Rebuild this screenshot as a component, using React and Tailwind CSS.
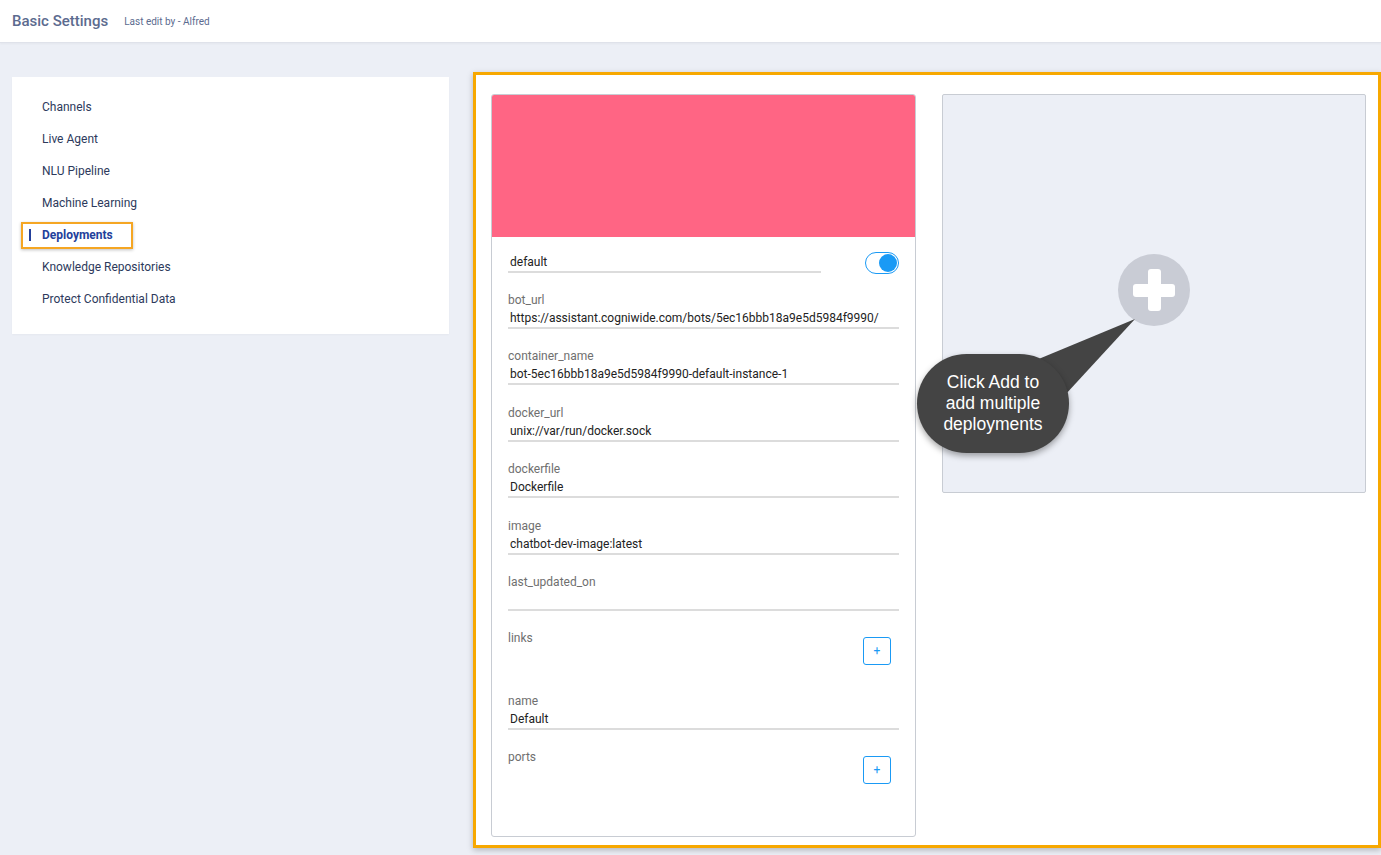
import React, { useState } from 'react';

const navItems = [
  'Channels',
  'Live Agent',
  'NLU Pipeline',
  'Machine Learning',
  'Deployments',
  'Knowledge Repositories',
  'Protect Confidential Data',
];

const fields = [
  { label: 'bot_url', value: 'https://assistant.cogniwide.com/bots/5ec16bbb18a9e5d5984f9990/' },
  { label: 'container_name', value: 'bot-5ec16bbb18a9e5d5984f9990-default-instance-1' },
  { label: 'docker_url', value: 'unix://var/run/docker.sock' },
  { label: 'dockerfile', value: 'Dockerfile' },
  { label: 'image', value: 'chatbot-dev-image:latest' },
  { label: 'last_updated_on', value: '' },
  { label: 'links', list: true },
  { label: 'name', value: 'Default' },
  { label: 'ports', list: true },
];

const Field = ({ label, value }) => (
  <div>
    <div className="text-xs leading-[14px] text-[#6f6f6f]">{label}</div>
    <div className="mt-[2px] h-[18px] px-[2px] text-xs leading-[18px] text-[#222] border-b-2 border-[#dcdcdc] box-content">
      {value}
    </div>
  </div>
);

const ListField = ({ label }) => (
  <div className="flex justify-between pb-[8px]">
    <div className="text-xs leading-[14px] text-[#6f6f6f]">{label}</div>
    <button className="mt-[6px] mr-[8px] w-[28px] h-[28px] border border-[#1a9af5] rounded-[3px] text-[#1a9af5] text-xs flex items-center justify-center">
      +
    </button>
  </div>
);

const Toggle = ({ on, onChange }) => (
  <button
    onClick={() => onChange(!on)}
    className="w-[34px] h-[22px] rounded-full border-[1.5px] border-[#1a9af5] bg-white flex items-center px-[1px] justify-end"
  >
    <span className="w-[18px] h-[18px] rounded-full bg-[#1a9af5]" />
  </button>
);

export default function App() {
  const [active, setActive] = useState('Deployments');
  const [enabled, setEnabled] = useState(true);

  return (
    <div className="min-h-[855px] bg-[#eceff6] font-['Roboto',sans-serif]">
      <header className="h-[43px] bg-white border-b border-[#dfe2ea] shadow-[0_1px_2px_rgba(0,0,0,0.04)] flex items-center pl-[12px]">
        <h1 className="text-[15px] font-medium text-[#5c6b8f]">Basic Settings</h1>
        <span className="ml-[16px] text-[10px] text-[#5c6b8f] mt-[1px]">Last edit by - Alfred</span>
      </header>

      <div className="flex items-start pl-[12px] pt-[29px] gap-[24px]">
        {/* settings nav */}
        <nav className="w-[437px] mt-[5px] bg-white pt-[14px] pb-[19px] shadow-[0_1px_2px_rgba(0,0,0,0.03)]">
          {navItems.map((item) => {
            const isActive = item === active;
            return (
              <div
                key={item}
                onClick={() => setActive(item)}
                className="relative h-[32px] flex items-center pl-[30px] cursor-pointer"
              >
                {isActive && (
                  <>
                    <span className="absolute left-[17px] top-[10px] w-[2px] h-[12px] bg-[#23409b]" />
                    <span className="absolute left-[9px] top-[3px] w-[112px] h-[27px] border-2 border-[#f5a623] shadow-[0_1px_3px_rgba(0,0,0,0.25)]" />
                  </>
                )}
                <span className={isActive ? 'text-xs font-bold text-[#23409b]' : 'text-xs text-[#2d3a5c]'}>
                  {item}
                </span>
              </div>
            );
          })}
        </nav>

        {/* deployments area */}
        <div className="flex-1 h-[776px] bg-white border-[3px] border-[#f7a800] shadow-[0_2px_6px_rgba(0,0,0,0.25)] flex items-start gap-[26px] pl-[15px] pt-[19px] pr-[12px]">
          <div className="w-[425px] h-[743px] border border-[#c8ccd3] rounded-[3px] bg-white overflow-hidden">
            <div className="h-[142px] bg-[#ff6584]" />
            <div className="px-[16px] pt-[15px]">
              <div className="flex items-center justify-between">
                <div className="w-[309px] h-[18px] px-[2px] text-xs leading-[18px] text-[#222] border-b-2 border-[#dcdcdc] box-content">
                  default
                </div>
                <Toggle on={enabled} onChange={setEnabled} />
              </div>
              <div className="mt-[19px] flex flex-col gap-[20.4px]">
                {fields.map((f) =>
                  f.list ? <ListField key={f.label} label={f.label} /> : <Field key={f.label} label={f.label} value={f.value} />
                )}
              </div>
            </div>
          </div>

          <div className="relative w-[424px] h-[399px] border border-[#c8ccd3] rounded-[2px] bg-[#eceff6] flex items-center justify-center">
            <button className="w-[72px] h-[72px] rounded-full bg-[#c9ccd5] flex items-center justify-center relative -mt-[7px]">
              <span className="absolute w-[42px] h-[13px] rounded-[3px] bg-white" />
              <span className="absolute w-[13px] h-[42px] rounded-[3px] bg-white" />
            </button>

            {/* callout */}
            <svg className="absolute left-0 top-0" width="424" height="399">
              <polygon points="86,268 192,224 122,300" fill="#444444" />
            </svg>
            <div className="absolute left-[-26px] top-[259px] w-[152px] h-[99px] rounded-[50px] bg-[#444444] shadow-[0_3px_6px_rgba(0,0,0,0.35)] flex items-center justify-center text-center text-white text-[17.5px] leading-[21px] font-['Liberation_Sans',sans-serif]">
              Click Add to
              <br />
              add multiple
              <br />
              deployments
            </div>
          </div>
        </div>
      </div>
    </div>
  );
}
